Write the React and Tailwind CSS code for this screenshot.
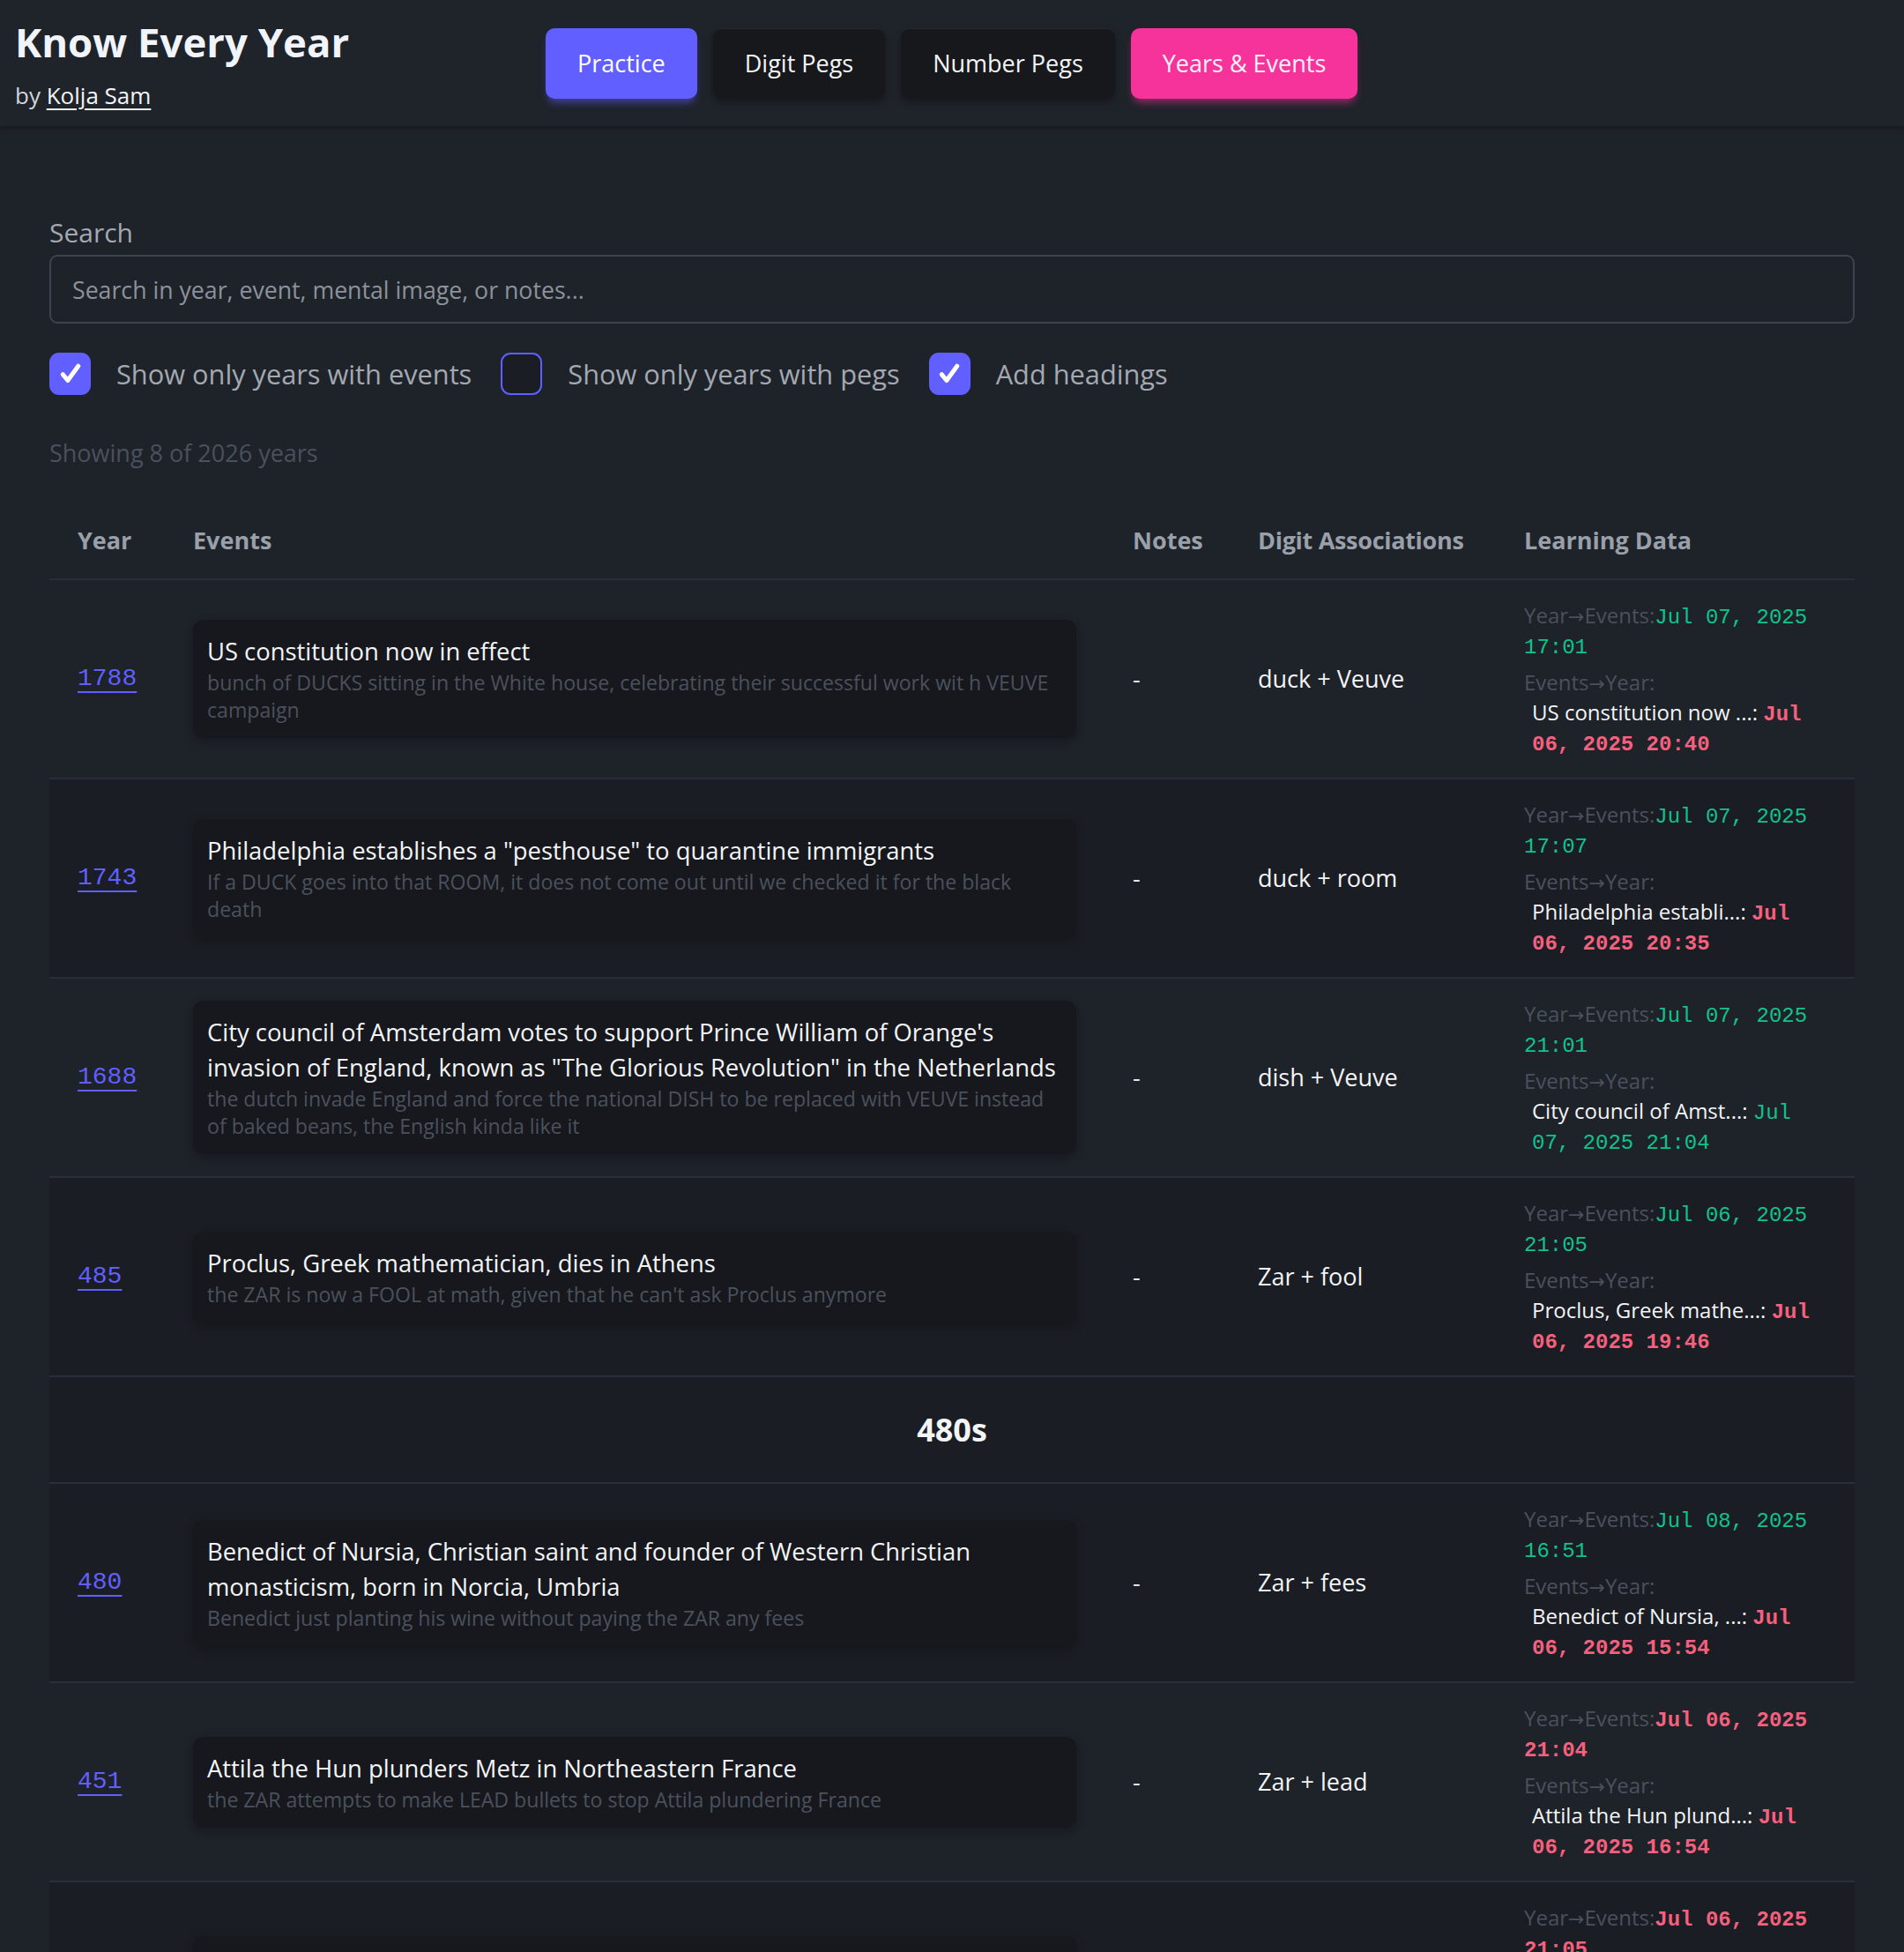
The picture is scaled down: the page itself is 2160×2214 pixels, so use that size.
import React from "react";

const ROWS = [
  {
    year: 1788,
    title: "US constitution now in effect",
    image: "bunch of DUCKS sitting in the White house, celebrating their successful work wit h VEUVE campaign",
    digits: "duck + Veuve",
    ye: { date: "Jul 07, 2025 17:01", due: false },
    ey: { date: "Jul 06, 2025 20:40", due: true },
  },
  {
    year: 1743,
    title: 'Philadelphia establishes a "pesthouse" to quarantine immigrants',
    image: "If a DUCK goes into that ROOM, it does not come out until we checked it for the black death",
    digits: "duck + room",
    ye: { date: "Jul 07, 2025 17:07", due: false },
    ey: { date: "Jul 06, 2025 20:35", due: true },
  },
  {
    year: 1688,
    title:
      'City council of Amsterdam votes to support Prince William of Orange\'s invasion of England, known as "The Glorious Revolution" in the Netherlands',
    image:
      "the dutch invade England and force the national DISH to be replaced with VEUVE instead of baked beans, the English kinda like it",
    digits: "dish + Veuve",
    ye: { date: "Jul 07, 2025 21:01", due: false },
    ey: { date: "Jul 07, 2025 21:04", due: false },
  },
  {
    year: 485,
    title: "Proclus, Greek mathematician, dies in Athens",
    image: "the ZAR is now a FOOL at math, given that he can't ask Proclus anymore",
    digits: "Zar + fool",
    ye: { date: "Jul 06, 2025 21:05", due: false },
    ey: { date: "Jul 06, 2025 19:46", due: true },
  },
  { heading: "480s" },
  {
    year: 480,
    title:
      "Benedict of Nursia, Christian saint and founder of Western Christian monasticism, born in Norcia, Umbria",
    image: "Benedict just planting his wine without paying the ZAR any fees",
    digits: "Zar + fees",
    ye: { date: "Jul 08, 2025 16:51", due: false },
    ey: { date: "Jul 06, 2025 15:54", due: true },
  },
  {
    year: 451,
    title: "Attila the Hun plunders Metz in Northeastern France",
    image: "the ZAR attempts to make LEAD bullets to stop Attila plundering France",
    digits: "Zar + lead",
    ye: { date: "Jul 06, 2025 21:04", due: true },
    ey: { date: "Jul 06, 2025 16:54", due: true },
  },
  {
    year: 410,
    title: "Visigoths under Alaric sack Rome",
    image: "the ZAR watches a SAW cut through the walls of Rome",
    digits: "Zar + saw",
    ye: { date: "Jul 06, 2025 21:05", due: true },
    ey: { date: "Jul 06, 2025 17:02", due: true },
  },
];

const NAV = [
  { label: "Practice", cls: "bg-[#615fff] text-white shadow-[0_7px_10px_-3px_rgba(97,95,255,0.55)]" },
  { label: "Digit Pegs", cls: "bg-[#16181c] text-gray-100 border-t border-[#24272d] shadow-[0_4px_8px_rgba(0,0,0,0.3)]" },
  { label: "Number Pegs", cls: "bg-[#16181c] text-gray-100 border-t border-[#24272d] shadow-[0_4px_8px_rgba(0,0,0,0.3)]" },
  { label: "Years & Events", cls: "bg-[#f6339a] text-pink-50 shadow-[0_7px_10px_-3px_rgba(246,51,154,0.55)]" },
];

function Checkbox({ checked, label }) {
  return (
    <label className="flex items-center gap-[29px]">
      {checked ? (
        <span className="w-[47px] h-[48px] rounded-[11px] bg-[#615fff] flex items-center justify-center">
          <svg width="30" height="30" viewBox="0 0 24 24" fill="none" stroke="white" strokeWidth="4" strokeLinecap="round" strokeLinejoin="round">
            <path d="M5 12.5l4.5 5.5L19 5" />
          </svg>
        </span>
      ) : (
        <span className="w-[47px] h-[48px] rounded-[11px] border-2 border-[#615fff] bg-[#1a1d23]" />
      )}
      <span className="text-[30.75px] text-[#a3a8b1]">{label}</span>
    </label>
  );
}

function Arrow() {
  return <span className="font-['DejaVu_Sans',sans-serif] text-[22px] leading-none">→</span>;
}

function DateText({ date, due }) {
  return (
    <span className={`font-['Liberation_Mono',monospace] leading-none ${due ? "text-[#f5607e] font-bold" : "text-[#12c28c]"}`}>
      {date}
    </span>
  );
}

function YearRow({ row, index }) {
  const stripe = index % 2 === 1 ? "bg-[#1a1d23]" : "";
  const cell = "border-b-2 border-[#2a2e36] align-middle";
  return (
    <tr className={stripe}>
      <td className={`${cell} pl-[32px] pr-[8px]`}>
        <a className="font-['Liberation_Mono',monospace] text-[28px] text-[#615fff] underline decoration-2 underline-offset-[7px]">
          {row.year}
        </a>
      </td>
      <td className={`${cell} px-[32px]`}>
        <div className="bg-[#16181d] rounded-[12px] p-4 shadow-[0_4px_12px_rgba(0,0,0,0.25)]">
          <div className="text-[27.4px] leading-[40px] font-medium text-gray-100">{row.title}</div>
          <div className="text-[23.1px] leading-[31px] text-[#4b515c]">{row.image}</div>
        </div>
      </td>
      <td className={`${cell} px-[32px] text-[27px] text-gray-200`}>-</td>
      <td className={`${cell} px-[32px] text-[27px] text-gray-100`}>{row.digits}</td>
      <td className={`${cell} pl-[32px] pr-[36px] py-[23px] text-[24px] leading-[34px]`}>
        <div>
          <span className="text-[#4b515c]">
            Year<Arrow />Events:
          </span>
          <DateText {...row.ye} />
        </div>
        <div className="mt-2">
          <div className="text-[#4b515c]">
            Events<Arrow />Year:
          </div>
          <div className="pl-[9px]">
            <span className="text-gray-100">{row.title.slice(0, 20)}...: </span>
            <DateText {...row.ey} />
          </div>
        </div>
      </td>
    </tr>
  );
}

export default function App() {
  return (
    <div className="min-h-screen bg-[#1e2229] font-['Open_Sans','Noto_Sans',sans-serif] text-gray-100">
      {/* Top bar */}
      <header className="flex items-center px-[17px] pt-[20px] pb-[19px] bg-[#1f232a] shadow-[0_2px_6px_rgba(0,0,0,0.25)]">
        <div className="w-[602px] shrink-0">
          <h1 className="text-[45.5px] leading-[55px] font-bold text-[#f1f4fb]">Know Every Year</h1>
          <p className="mt-[17px] text-[26px] leading-[32px] text-gray-300">
            by <a className="text-gray-100 underline underline-offset-[5px]">Kolja Sam</a>
          </p>
        </div>
        <nav className="flex gap-[18px]">
          {NAV.map((n) => (
            <button key={n.label} className={`h-[80px] px-[36px] rounded-[10px] text-[27px] font-medium ${n.cls}`}>
              {n.label}
            </button>
          ))}
        </nav>
      </header>

      <main className="px-[56px] pt-[101px]">
        {/* Search */}
        <div className="text-[30px] leading-[40px] text-[#a3a8b1] mb-[5px]">Search</div>
        <input
          className="w-full h-[78px] border-2 border-[#3d424b] rounded-[9px] bg-transparent px-[24px] text-[26.7px] placeholder:text-[#8c929c] outline-none"
          placeholder="Search in year, event, mental image, or notes..."
        />

        <div className="flex items-center gap-[33px] mt-[33px]">
          <Checkbox checked label="Show only years with events" />
          <Checkbox label="Show only years with pegs" />
          <Checkbox checked label="Add headings" />
        </div>

        <p className="mt-[46px] text-[27px] leading-[40px] text-[#4b515c]">Showing 8 of 2026 years</p>

        {/* Table */}
        <table className="mt-[36px] w-full table-fixed border-collapse">
          <thead>
            <tr className="text-left text-[27px] font-bold text-[#9aa0a9] whitespace-nowrap">
              <th className="w-[131px] pl-[32px] py-[23px] leading-[40px] border-b-2 border-[#2a2e36]">Year</th>
              <th className="w-[1066px] px-[32px] border-b-2 border-[#2a2e36]">Events</th>
              <th className="w-[142px] px-[32px] border-b-2 border-[#2a2e36]">Notes</th>
              <th className="w-[302px] px-[32px] border-b-2 border-[#2a2e36] tracking-[-0.3px]">Digit Associations</th>
              <th className="w-[407px] px-[32px] border-b-2 border-[#2a2e36]">Learning Data</th>
            </tr>
          </thead>
          <tbody>
            {ROWS.map((row, i) =>
              row.heading ? (
                <tr key={row.heading} className="bg-[#1a1d23]">
                  <td colSpan={5} className="border-b-2 border-[#2a2e36] py-[35px] text-center text-[36px] leading-[49px] font-bold text-gray-100">
                    {row.heading}
                  </td>
                </tr>
              ) : (
                <YearRow key={row.year} row={row} index={i} />
              )
            )}
          </tbody>
        </table>
      </main>
    </div>
  );
}
